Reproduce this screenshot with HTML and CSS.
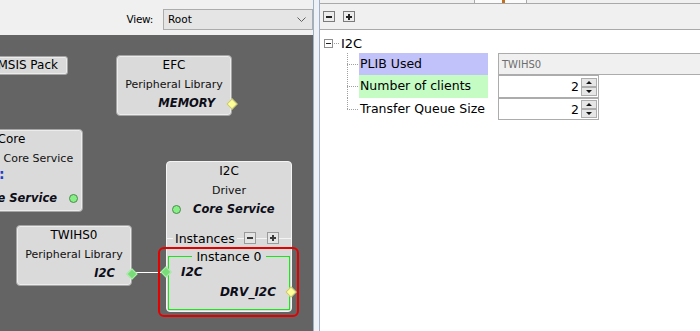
FILE: index.html
```html
<!DOCTYPE html>
<html lang="en">
<head>
    <meta charset="UTF-8">
    <meta name="viewport" content="width=device-width, initial-scale=1.0">
    <title>Project Graph - I2C</title>
    <link rel="stylesheet" href="styles.css">
</head>
<body>
<div class="app">

    <section class="designer">
        <div class="toolbar">
            <span class="view-label">View:</span>
            <div class="combo">
                <span>Root</span>
                <svg class="chevron" width="9" height="5" viewBox="0 0 9 5"><path d="M0.5 0.5 L4.5 4.5 L8.5 0.5" fill="none" stroke="#606060"/></svg>
            </div>
        </div>

        <div class="canvas">
            <div class="wire"></div>

            <div class="node pack">CMSIS Pack</div>

            <div class="node efc">
                <div class="n-title">EFC</div>
                <div class="n-sub">Peripheral Library</div>
                <div class="n-cap">MEMORY<span class="port yellow out"></span></div>
            </div>

            <div class="node core">
                <div class="n-title">Core</div>
                <div class="n-sub">Harmony Core Service</div>
                <div class="n-note">:</div>
                <div class="n-cap with-dot">Core Service<span class="dot"></span></div>
            </div>

            <div class="node twihs">
                <div class="n-title">TWIHS0</div>
                <div class="n-sub">Peripheral Library</div>
                <div class="n-cap">I2C<span class="port green out"></span></div>
            </div>

            <div class="node driver">
                <div class="n-title">I2C</div>
                <div class="n-sub">Driver</div>
                <div class="n-cap with-dot"><span class="dot"></span>Core Service</div>

                <div class="inst-head">
                    <span class="rule rule-a"></span>
                    <span class="inst-label">Instances</span>
                    <span class="rule rule-b"></span>
                    <span class="mini"><svg width="8" height="8" viewBox="0 0 8 8"><path d="M1 4h6" stroke="#3a3a3a" stroke-width="2"/></svg></span>
                    <span class="rule rule-c"></span>
                    <span class="mini"><svg width="8" height="8" viewBox="0 0 8 8"><path d="M1 4h6M4 1v6" stroke="#3a3a3a" stroke-width="2"/></svg></span>
                    <span class="rule rule-d"></span>
                </div>

                <div class="instance">
                    <div class="inst-title">Instance 0</div>
                    <div class="inst-cap in">I2C<span class="port green"></span></div>
                    <div class="inst-cap out">DRV_I2C<span class="port yellow"></span></div>
                </div>

                <div class="selection"></div>
            </div>
        </div>
    </section>

    <div class="splitter"></div>

    <section class="config">
        <div class="tabstrip"><span class="tab"><i></i></span></div>

        <div class="config-tools">
            <button class="tool"><svg width="8" height="8" viewBox="0 0 8 8"><path d="M1 4h6" stroke="#222" stroke-width="2"/></svg></button>
            <button class="tool"><svg width="8" height="8" viewBox="0 0 8 8"><path d="M1 4h6M4 1v6" stroke="#222" stroke-width="2"/></svg></button>
        </div>

        <div class="tree">
            <div class="tree-root">
                <span class="toggle"></span>
                <span class="stub"></span>
                <span class="root-name">I2C</span>
            </div>

            <div class="props">
                <div class="prop">
                    <span class="twig"></span>
                    <span class="prop-label plib">PLIB Used</span>
                    <span class="prop-value readonly">TWIHS0</span>
                </div>
                <div class="prop">
                    <span class="twig"></span>
                    <span class="prop-label clients">Number of clients</span>
                    <span class="prop-value spin">
                        <span>2</span>
                        <svg width="16" height="18" viewBox="0 0 16 18">
                            <rect x="0.5" y="0.5" width="15" height="8" fill="#e6e6e6" stroke="#adadad"/>
                            <rect x="0.5" y="9.5" width="15" height="8" fill="#e6e6e6" stroke="#adadad"/>
                            <path d="M5 6h6l-3-3z M5 12h6l-3 3z" fill="#111"/>
                        </svg>
                    </span>
                </div>
                <div class="prop">
                    <span class="twig"></span>
                    <span class="prop-label">Transfer Queue Size</span>
                    <span class="prop-value spin">
                        <span>2</span>
                        <svg width="16" height="18" viewBox="0 0 16 18">
                            <rect x="0.5" y="0.5" width="15" height="8" fill="#e6e6e6" stroke="#adadad"/>
                            <rect x="0.5" y="9.5" width="15" height="8" fill="#e6e6e6" stroke="#adadad"/>
                            <path d="M5 6h6l-3-3z M5 12h6l-3 3z" fill="#111"/>
                        </svg>
                    </span>
                </div>
            </div>
        </div>
    </section>

</div>
</body>
</html>
```

FILE: styles.css
```css
body {
    margin: 0;
    font-family: "DejaVu Sans", Verdana, sans-serif;
    font-size: 12px;
    color: #000;
    background: #f0f0f0;
}

.app {
    display: flex;
    height: 331px;
    overflow: hidden;
}

/* left side : project graph */
.designer {
    width: 313px;
    flex: none;
    display: flex;
    flex-direction: column;
    border-right: 1px solid #9db0c6;
}

.toolbar {
    height: 35px;
    box-sizing: border-box;
    padding-top: 3px;
    display: flex;
    align-items: center;
    justify-content: flex-end;
    gap: 10px;
    background: #f0f0f0;
}

.view-label {
    font-size: 10.5px;
    letter-spacing: -0.3px;
}

.combo {
    width: 150px;
    height: 21px;
    box-sizing: border-box;
    border: 1px solid #acacac;
    background: #e5e5e5;
    display: flex;
    align-items: center;
    justify-content: space-between;
    padding: 0 6px 0 4px;
    font-size: 10.5px;
}

.canvas {
    flex: 1;
    position: relative;
    overflow: hidden;
    background: #646464;
}

.wire {
    position: absolute;
    left: 131px;
    top: 237px;
    width: 35px;
    height: 1px;
    background: #fff;
}

.node {
    position: absolute;
    box-sizing: border-box;
    background: #dadada;
    border: 1px solid #a5a5a5;
    border-radius: 4px;
    box-shadow: inset 0 0 0 1px #ececec;
    text-align: center;
}

.pack {
    left: -21px;
    top: 21px;
    width: 89px;
    height: 19px;
    line-height: 17px;
    font-size: 12px;
    border-radius: 3px;
}

.efc { left: 116px; top: 20px; width: 116px; height: 61px; }
.core { left: -60px; top: 94px; width: 143px; height: 83px; }
.twihs { left: 16px; top: 190px; width: 116px; height: 61px; }
.driver { left: 166px; top: 126px; width: 126px; height: 151px; border-color: #f4f4f4; box-shadow: none; }

.n-title {
    line-height: 19px;
    font-size: 12px;
}

.n-sub {
    line-height: 19px;
    font-size: 11px;
    color: #111;
}

.n-cap {
    position: relative;
    line-height: 19px;
    font-size: 11.5px;
    font-weight: bold;
    font-style: italic;
    color: #0d0d18;
    text-align: right;
    padding-right: 16px;
}

.n-cap.with-dot {
    display: flex;
    align-items: center;
    gap: 12px;
}

.core .n-cap {
    justify-content: flex-end;
    padding-right: 4px;
    margin-top: 11px;
}

.driver .n-cap {
    justify-content: flex-start;
    padding-left: 5px;
    padding-right: 0;
}

.n-note {
    height: 10px;
    line-height: 12px;
    text-align: left;
    padding-left: 58px;
    color: #2440c8;
    font-weight: bold;
    font-size: 14px;
}

.dot {
    width: 9px;
    height: 9px;
    flex: none;
    box-sizing: border-box;
    border-radius: 50%;
    background: #86ef86;
    border: 1px solid #4f8a4f;
}

.port {
    position: absolute;
    width: 8px;
    height: 8px;
    top: 50%;
    margin-top: -4px;
    box-sizing: border-box;
    transform: rotate(45deg);
}
.port.out { right: -5px; }
.port.yellow { background: #ffff99; border: 1px solid #c9c97c; }
.port.green { background: #78dd78; border: 1px solid #a9eea9; }

.inst-head {
    display: flex;
    align-items: center;
    height: 14px;
    margin-top: 12px;
    font-size: 12.5px;
}

.rule { height: 1px; background: #f4f4f4; }
.rule-a { width: 6px; }
.rule-b { width: 7px; }
.rule-c { width: 11px; }
.rule-d { flex: 1; }

.inst-label {
    margin: 0 2px;
}

.mini {
    width: 12px;
    height: 12px;
    box-sizing: border-box;
    border: 1px solid #9a9a9a;
    background: #e4e4e4;
    display: flex;
    align-items: center;
    justify-content: center;
}

.instance {
    margin: 11px 1px 0;
    height: 54px;
    box-sizing: border-box;
    border: 1px solid #1ee21e;
}

.inst-title {
    width: fit-content;
    margin: -8px auto 0;
    padding: 0 4px;
    line-height: 15px;
    background: #dadada;
    font-size: 12.5px;
}

.inst-cap {
    position: relative;
    line-height: 16px;
    font-size: 12px;
    font-weight: bold;
    font-style: italic;
    color: #0d0d18;
}
.inst-cap.in { text-align: left; padding-left: 12px; }
.inst-cap.in .port { left: -7px; }
.inst-cap.out { text-align: right; padding-right: 13px; margin-top: 4px; }
.inst-cap.out .port { right: -6px; }

.selection {
    position: absolute;
    left: -9px;
    top: 85px;
    width: 141px;
    height: 70px;
    box-sizing: border-box;
    border: 2px solid #e50000;
    border-radius: 6px;
}

.splitter {
    width: 5px;
    flex: none;
    background: #eef1f5;
}

/* right side : configuration options */
.config {
    flex: 1;
    min-width: 0;
    display: flex;
    flex-direction: column;
    border-left: 1px solid #9db0c6;
    background: #fff;
}

.tabstrip {
    height: 3px;
    border-bottom: 1px solid #a9a9a9;
    background: #f0f0f0;
    padding-left: 154px;
}

.tab {
    display: block;
    width: 53px;
    height: 3px;
    box-sizing: border-box;
    border-left: 1px solid #a9a9a9;
    border-right: 1px solid #a9a9a9;
    background: #fbfbfb;
    position: relative;
}

.tab i {
    position: absolute;
    left: 27px;
    top: 0;
    width: 3px;
    height: 3px;
    background: #c07020;
}

.config-tools {
    height: 26px;
    box-sizing: border-box;
    border-bottom: 1px solid #a9a9a9;
    padding: 7px 0 0 3px;
    display: flex;
    align-items: flex-start;
    gap: 8px;
    background: #f0f0f0;
}

.tool {
    width: 12px;
    height: 11px;
    padding: 0;
    box-sizing: border-box;
    border: 1px solid #7b7b7b;
    background: #ececec;
    display: flex;
    align-items: center;
    justify-content: center;
}

.tree {
    flex: 1;
    padding: 4px 0 0 4px;
}

.tree-root {
    height: 19px;
    display: flex;
    align-items: center;
    font-size: 13px;
}

.toggle {
    width: 9px;
    height: 9px;
    box-sizing: border-box;
    border: 1px solid #8e8e8e;
    background: linear-gradient(#222, #222) center / 5px 1px no-repeat, #fff;
}

.stub {
    width: 6px;
    height: 1px;
    margin: 0 1px;
    background: repeating-linear-gradient(to right, #a0a0a0 0 1px, transparent 1px 2px);
}

.props {
    padding-left: 23px;
}

.prop {
    display: flex;
    height: 22px;
}
.prop:nth-child(2) { height: 23px; }

.twig {
    width: 12px;
    flex: none;
    background:
        repeating-linear-gradient(to bottom, #a0a0a0 0 1px, transparent 1px 2px) left top / 1px 100% no-repeat,
        repeating-linear-gradient(to right, #a0a0a0 0 1px, transparent 1px 2px) left center / 100% 1px no-repeat;
}
.prop:last-child .twig {
    background-size: 1px 50%, 100% 1px;
}

.prop-label {
    width: 129px;
    flex: none;
    box-sizing: border-box;
    padding-left: 1px;
    line-height: 22px;
    font-size: 12.5px;
    white-space: nowrap;
}
.plib { background: #c2c2fa; }
.clients { background: #c4fcc4; }

.prop-value {
    margin-left: 10px;
    flex: none;
    box-sizing: border-box;
    border: 1px solid #acacac;
    display: flex;
    align-items: center;
}

.readonly {
    width: 215px;
    padding-left: 3px;
    background: #f0f0f0;
    color: #6d6d6d;
    font-size: 10px;
}

.spin {
    width: 101px;
    justify-content: flex-end;
    gap: 2px;
    padding-right: 1px;
    background: #fff;
    font-size: 12.5px;
}
```
